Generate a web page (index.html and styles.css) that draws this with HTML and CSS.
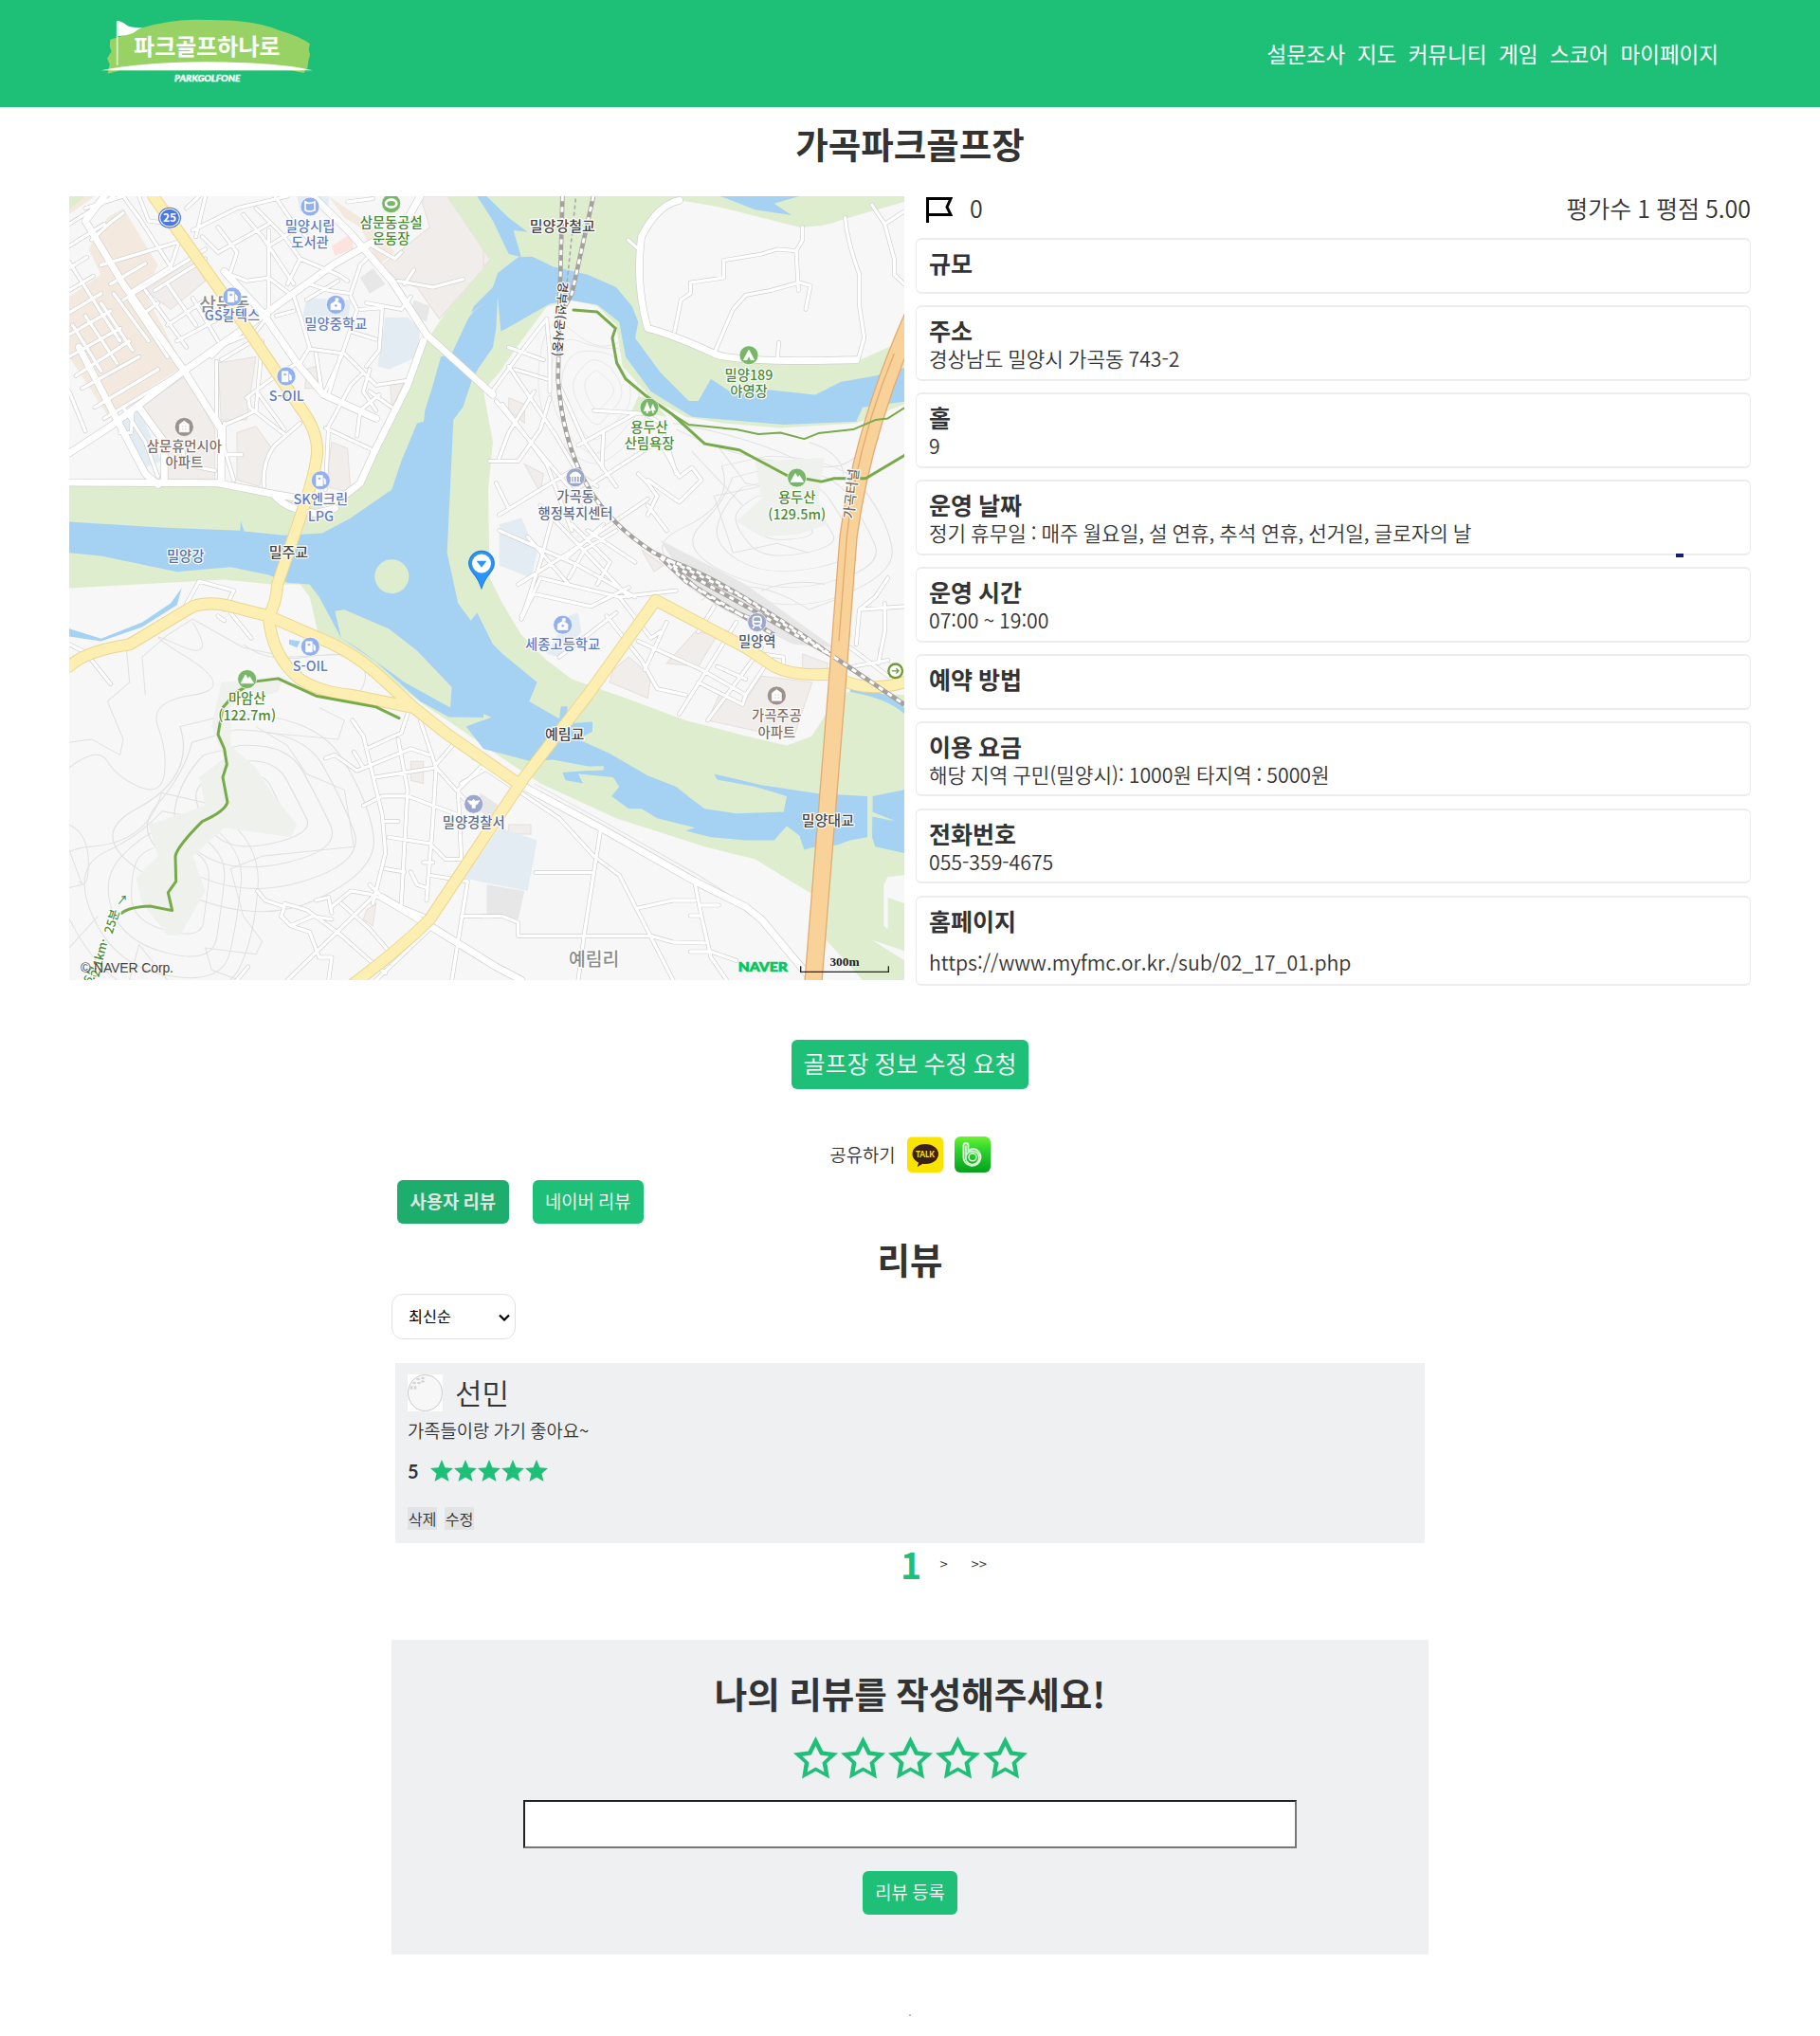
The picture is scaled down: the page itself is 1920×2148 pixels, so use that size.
FILE: index.html
```html
<!DOCTYPE html>
<html lang="ko">
<head>
<meta charset="utf-8">
<title>파크골프하나로</title>
<link rel="stylesheet" href="styles.css">
</head>
<body>
<header class="header">
  <svg class="logo" viewBox="0 0 672 210">
    <path d="M28 62 Q90 45 130 25 Q230 -5 330 0 Q480 -2 560 32 Q630 52 660 76 L656 92 660 110 655 130 652 152 640 168 600 160 60 160 20 170 26 140 18 122 32 100 26 84 Z" fill="#98d264"/>
    <path d="M50 3v140" stroke="#e9f5df" stroke-width="5"/>
    <path d="M52 2 Q68 6 86 20 Q100 25 130 24 Q112 32 100 42 Q80 50 52 52Z" fill="#fff"/>
    <path d="M0 160 Q120 135 330 133 Q560 134 668 160Z" fill="#fff"/>
    <text x="334" y="112" class="logo-name">파크골프하나로</text>
    <text x="335" y="196" class="logo-sub" textLength="208" lengthAdjust="spacingAndGlyphs">PARKGOLFONE</text>
  </svg>
  <nav class="nav"><a>설문조사</a><a>지도</a><a>커뮤니티</a><a>게임</a><a>스코어</a><a>마이페이지</a></nav>
</header>
<main>
<h1 class="title">가곡파크골프장</h1>
<section class="overview">
<svg class="map" viewBox="9 22 2643 2480" preserveAspectRatio="none">
  <defs>
    <g id="minor">
      <path d="M9 110L150 22M9 180L120 110M80 160L140 105 180 75M60 60L180 22M9 250L65 215M9 320L85 275M9 390L110 330M9 460L140 385M9 530L170 440M30 590L200 480M50 630L230 530M90 690L290 570M120 725L345 590M110 240L360 165M140 300L250 235M180 350L440 190M210 320L330 245M235 400L290 360"/>
      <path d="M9 230L110 390 170 480M20 430L110 575M60 400L160 550M110 360L210 510M150 330L260 480M200 350L320 530M9 640L60 765M180 690L250 800 290 910M180 22L230 90 330 245M230 22L260 100 340 110M330 245L355 170M410 150L440 22M400 130L540 60 700 22M430 150L480 200 640 110M380 60L420 22M480 120L540 200 520 260M560 80L620 150 720 300M600 60L690 150 740 220M660 22L720 110 770 160M250 320L380 500M320 300L410 430M400 345L480 480M280 320L440 220M320 430L440 350M350 480L500 400M460 530L500 490 600 450 640 400 640 130M475 545L475 720 490 750M490 540L590 480M495 260L570 290 640 280 720 340 740 400 770 500 740 550M700 300L740 220M770 300L830 320 900 330M740 220L860 270 890 290M640 180L720 130M570 660L650 600 730 550M575 655L580 690 690 775M620 480L600 700M610 650L690 760M490 750L560 720 600 700M500 740L500 820 530 920M505 840L555 840M740 740L660 810Q620 860 625 940M770 505L880 520 980 620 1080 605M790 520L810 650M900 340L920 380 870 530 815 650M870 520L830 650M930 380L1000 375 990 510 950 560M900 450L980 475M900 330L930 240 950 220M980 700L940 640 960 570M960 640L1030 690M990 650L930 700 920 780M820 755L980 830 1040 700M830 750L900 620 940 580M830 750L820 950M1050 290L1160 310 1255 285M1100 255L1070 300M950 360L1060 380 1090 340M970 180L1040 220 1060 200M890 40L970 30M760 350L860 290M665 400L720 385M370 830L370 870 470 890M210 700L205 770 170 770"/>
      <path d="M1778 160L1805 185M1925 450L1945 350 1975 330 1975 295 2080 280 2080 225 2200 205 2250 190 2310 195 2330 160 2330 120M2050 520L2110 380 2150 335 2230 320 2320 295 2355 305 2340 380M2310 195L2317 320M2250 540L2255 485M2465 90Q2470 160 2510 270L2510 370 2525 470 2505 540M2550 50L2590 110 2620 220 2620 270 2652 300M2590 110L2652 70M1400 500L1510 540M1340 650L1450 500 1520 410 1530 520 1530 640M1400 560L1550 780 1620 900 1680 940M1560 620L1640 800 1740 940M1420 570L1520 600M1360 670L1640 1000M1380 680L1520 870 1600 1080M1480 640L1400 770 1370 850M1340 860L1430 860 1500 760 1530 660M1370 1030L1500 950 1600 890M1400 1010L1360 930M1670 700L1750 705 1830 710 1880 740 1930 900M1800 710L1620 810M1700 770L1695 880M1870 800L1620 960M1880 800L1940 910 1980 880 2010 920 1940 990 1840 920M1810 900L1840 930 1870 970 1840 1030M1840 1000L1900 1080M1840 980L1590 1150 1430 1250M1500 1000L1780 1290M1540 1030L1500 1180 1450 1330M1600 1060L1720 1180 1680 1250M1650 1080L1800 1180M1460 1100L1590 1250M1700 1060L1580 1170M1740 1080L1640 1140 1590 1230M1370 1080L1620 1190 1800 1290M1440 1360L1500 1230 1750 1290 1930 1270M1440 1350L1480 1280 1660 1320 1780 1260M1750 1290L1850 1420 1880 1400M1560 1480L1740 1340M1710 1350L1820 1490 1870 1580 1960 1600M1810 1430L2010 1520 2150 1600 2140 1630 2000 1560M1900 1370L1830 1520M2120 1370L2040 1500 1940 1660M2200 1450L2120 1560 2030 1680M2050 1320L2000 1400M2150 1600L2230 1480M2200 1470L2270 1480 2270 1530M2060 1510L2150 1550M2600 1230L2560 1290 2510 1330 2500 1440M2510 1330L2652 1320M2590 1310L2590 1400 2570 1500M2480 1450L2600 1540M2490 1510L2600 1490"/>
      <path d="M370 1330L420 1240 530 1270 500 1330M480 1350L500 1365M520 1340L585 1420M80 1490L140 1565M9 1440L70 1470M905 1680L940 1730 1000 1980 1010 2100 970 2260M1080 1660L1060 1720 950 1770M1050 1740L1080 1900 1060 2260M1120 1680L1170 1830 1160 2000 1140 2250M820 1800L850 1790 920 1840 1090 1770 1150 1790M910 1780L940 1830M980 1860L1170 1830 1260 1930M940 1950L1000 1920 1080 1920 1240 1980M1000 2000L1050 2000M1020 2050L1150 2070 1200 2120 1250 2120 1240 1900 1320 1820M1170 1820L1230 1750M1250 1880L1350 1820 1290 1800M1010 2150L1070 2160M1090 2160L1110 2200 1140 2210M1130 2130L1160 2130M1150 2170L1270 2190 1220 2502M1250 2300L1350 2300M605 2220L630 2250 690 2270 680 2300 710 2330 780 2300 840 2310M690 2260L760 2280 870 2360 960 2440 1010 2480M710 2330L770 2350 800 2430 840 2430 830 2502M840 2270L900 2220 960 2230 1160 2310M790 2250L830 2240 840 2290M870 2260L960 2340 1020 2410M960 2200L990 2230M980 2230L700 2502M1150 2340L980 2502M540 2502L575 2460"/>
      <path d="M1320 1830L1410 1890 1560 1990 1670 2110 1750 2170 1920 2502M1410 1900L1380 1960M1690 2030L1640 2350 1620 2502M1485 2162L1670 2162M1320 2300L1380 2300 1430 2320 1430 2362 1850 2362 1920 2382 2020 2385M1805 2275L1920 2250 1990 2250M1990 2200L2010 2300 2040 2430 2090 2502M2010 2265L2065 2265M1975 2298L2010 2298M1975 2412L2040 2412 2120 2440"/>
    </g>
    <g id="major">
      <path d="M9 835L140 750 365 580 620 400 850 235 1070 110 1120 22M120 22L60 100 180 300 370 570 490 760 490 930M40 500L250 900 290 935M500 260L620 390 730 550 815 650 980 725M780 22L900 140 1030 290 1140 460 1350 650M230 690L310 800 310 930M9 928L480 930 660 965 780 985 860 985 930 930 975 830 1080 620 1130 480M660 970Q700 1015 790 1025L850 1010"/>
      <path d="M1940 35Q1870 50 1820 150 1800 300 1840 440 1920 460 2050 520 2110 550 2500 540 2600 500M1940 35L2060 55 2320 120Q2400 125 2460 90L2652 22M2060 55V22M1350 660L1360 720 1365 900 1350 1100 1370 1270 1430 1390 1530 1490 1620 1540 1770 1610 1960 1680 2150 1730 2290 1755Q2350 1750 2400 1680M1540 370Q1450 460 1400 560L1330 680M1600 1550Q1650 1620 1740 1610"/>
      <path d="M1430 1880L1690 2020 1990 2190 2150 2270 2200 2310 2350 2490M1000 2240L1150 2330 1360 2460 1440 2502"/>
    </g>
    <path id="yellow" d="M275 22L530 380 740 690Q800 770 793 840 788 890 760 980L668 1250Q665 1310 640 1350M9 1510Q60 1460 200 1440L400 1320Q460 1300 540 1325L640 1350 800 1420Q900 1460 980 1530L1100 1640 1200 1720 1430 1880M640 1350Q650 1480 740 1550 800 1590 900 1600L1100 1640M1865 1300L1650 1600 1450 1860 1310 2070 1150 2310Q1060 2400 900 2520M1865 1300L2150 1450 2240 1510Q2310 1545 2440 1532M2440 1545Q2530 1595 2652 1560"/>
    <path id="orange" d="M2680 400Q2520 760 2475 1100L2440 1560 2363 2520"/>
    <path id="rail" d="M1570 22L1562 330 1556 600Q1570 800 1650 940 1720 1060 1860 1150L2140 1290 2430 1480 2652 1630M1668 22L1600 330 1562 400M1900 1172Q2080 1230 2430 1480M1920 1190L2170 1330 2430 1480M1900 1172Q2020 1310 2200 1370M1880 1165L1960 1240 2240 1410"/>
    <g id="gas"><circle r="30"/><path d="M-14-16H6V17H-14ZM9-8L16-2V12H10" fill="#fff"/><path d="M-9-10H1V-2H-9Z"/></g>
    <g id="school"><circle r="30"/><path d="M-16-2L0-12 16-2V16H-16ZM-1-20H8V-12H-1Z" fill="#fff"/><circle cy="3" r="5"/></g>
    <g id="apt"><circle r="30"/><path d="M-15-8L0-19 15-8V16H-15Z" fill="#fff"/><path d="M-6-4h4v4h-4zM3-4h4v4h-4zM-6 5h4v4h-4zM3 5h4v4h-4z"/></g>
    <g id="peak"><circle r="30"/><path d="M-20 13L-5-14 3-1 8-8 21 13Z" fill="#fff"/></g>
    <g id="tree"><circle r="30"/><path d="M-17 10L-7-17 3 10H-5V17H-9V10ZM4 8L11-11 19 8H13V16H10V8Z" fill="#fff"/></g>
    <g id="tent"><circle r="30"/><path d="M-17 15L0-17 17 15H6L0 2-6 15Z" fill="#fff"/></g>
    <g id="hill">
      <path d="M0-60Q50-80 70-30T100 50 40 90-50 60-70-10Z"/>
      <path d="M0-110Q80-120 110-50T160 70 70 150-80 110-120 0-60-90Z"/>
      <path d="M-10-160Q110-170 150-80T220 90 110 210-110 180-170 20-100-130Z"/>
      <path d="M-20-210Q150-210 200-100T280 110 150 270-150 230-220 30-130-170Z"/>
      <path d="M-30-260Q180-260 250-120T330 130 180 330-200 280-270 40-160-220Z"/>
    </g>
  </defs>
  <path class="land" d="M0 0H2700V2600H0Z"/>
  <g fill="none" stroke="#e0e0e0" stroke-width="3">
    <use href="#hill" transform="translate(560 1920) scale(1.25 1)"/>
    <use href="#hill" transform="translate(330 2180) rotate(30)"/>
    <use href="#hill" transform="translate(2250 1040) scale(1.1 .75)"/>
    <use href="#hill" transform="translate(1690 620) rotate(70) scale(.7 .55)"/>
    <path d="M9 1750L80 1740 170 1790 180 1740 130 1620 200 1560 190 1450M9 1830Q100 1760 130 1810T230 1890 310 1850 290 1700 400 1600 380 1480 350 1440 400 1370M250 1600L240 1480 320 1410 400 1360 560 1450 700 1480 900 1470 960 1540M560 1440Q640 1500 760 1480T920 1490 940 1570 860 1580M600 1700L700 1760 760 1850 880 1900 910 2080 620 2110 520 2150 560 2300 620 2380 600 2420 440 2400 460 2470 540 2500M640 1720L860 1740 880 1680 800 1640M9 2010Q70 2040 70 2130T40 2190M9 2090L50 2200 9 2210M200 2502L230 2390 320 2502M9 2400L100 2300M1920 740Q2150 780 2300 850T2520 820M1930 760Q2120 850 2250 860M2060 810L2150 930 2200 940 2050 970 2110 1150 2250 1120 2350 1150M1980 830L2140 1000M2010 1300Q2150 1200 2350 1330L2430 1300M2200 1270Q2300 1230 2400 1250M2350 800Q2450 830 2460 900M2590 1430Q2540 1480 2610 1500M1480 1880L1700 2000 2000 2170 2190 2290 2350 2470"/>
  </g>
  <g fill="#eff2ec"><path d="M490 1560L690 1540 670 1590 520 1630 520 1760 600 1830 650 1910 730 2010 710 2050 500 2020 400 2110 440 2220 360 2360 320 2360 240 2260 220 2180 290 2110 260 2010 440 1950 420 1860 500 1800 460 1700Z"/><path d="M2120 1050L2200 980 2180 860 2400 850 2380 980 2410 1060 2320 1090 2200 1100Z"/></g>
  <g fill="#f4e9de"><path d="M9 22H90L9 80ZM130 90L180 60 290 240 250 330 370 560 130 715 9 530V340L110 270 70 190ZM830 22L880 90 930 120 990 240 1040 200 1000 150 930 90Z"/></g>
  <g fill="#f1edea" stroke="#e6dfda" stroke-width="3"><path d="M250 320L400 220 440 290 330 380ZM480 550L600 530 570 730 490 730ZM220 690L380 590 470 760V920H320L320 800ZM540 770L600 750 650 820 610 940 540 920ZM840 800L890 820 900 960 820 940ZM1120 22L1205 22 1343 225 1180 410 1110 310 1050 290 1000 240 1150 120ZM760 570L790 560 800 630 755 630ZM1025 615L1070 610 1030 690ZM1400 660L1450 680 1450 740 1400 700ZM1450 870L1510 900 1500 960ZM1990 1400L2060 1410 2000 1510 1900 1500ZM1730 1520L1780 1480 1850 1540 1840 1610 1720 1560ZM2200 1540L2360 1560 2300 1740 2030 1680 2070 1590 2140 1630ZM2330 1470L2410 1500 2400 1540 2330 1520ZM1400 2010H1470V2040H1400ZM1820 1140L1890 1190 1860 1210ZM1090 1810L1130 1810 1130 1880 1090 1870ZM950 2280L980 2260 970 2330 940 2310ZM1320 190L1345 220 1320 245Z"/></g>
  <g fill="#fce3df"><path d="M840 180L900 140 910 190 850 210Z"/></g>
  <g fill="#e3ebf3"><path d="M155 745L230 690 300 860 250 880ZM760 345L900 350 890 430 745 420ZM1010 405L1080 405 1120 440 1110 530 1020 570 985 560ZM730 22H830L830 50 740 70ZM1370 1060L1440 1040 1490 1150 1470 1230 1370 1190ZM1590 1350L1620 1340 1630 1400 1560 1480 1520 1470ZM1370 2020L1490 2060 1460 2220 1260 2180Z"/></g>
  <g fill="#e7e7e7"><path d="M930 280L970 250 1010 300 960 330ZM1100 350L1150 370 1140 420 1090 390ZM1330 2200L1450 2220 1430 2310 1330 2290ZM1310 1910L1370 1950 1350 2000 1300 1960ZM1880 1110L2150 1250 2430 1450 2300 1440 2080 1330 1970 1260Z"/></g>
  <path fill="#dfedcf" d="M9 22H60L9 65ZM9 938L480 940 740 985 840 1010 930 940 975 840 1010 740 1080 640 1140 480 1200 390 1343 225 1205 22H2652V680L2500 740 2260 755 2080 740 1960 720 1850 660 1760 560 1740 430 1680 370 1600 350 1520 372 1440 480 1370 580 1320 640 1350 800 1335 950 1340 1230 1380 1310 1440 1410 1520 1490 1600 1550 1770 1610 1960 1680 2150 1730 2280 1760 2360 1730 2410 1650 2470 1590 2652 1600V2502H2520L2400 2370 2360 2230 2180 2120 2020 2080 1740 1990 1500 1880 1320 1760 1250 1710 1130 1630 960 1500 800 1420 770 1290 740 1250 650 1250 500 1235 9 1262ZM1790 700L1810 655 1850 665 1900 720Z"/>
  <path class="land" d="M2652 40L2460 95Q2400 120 2320 120L2060 55 1940 35Q1870 50 1820 150 1800 300 1840 440L1920 470 2050 520 2110 545H2500L2600 500 2652 480ZM2600 2175L2652 2170V2260L2600 2240V2340L2587 2330V2200ZM2550 2375L2652 2410V2440Z"/>
  <g fill="#a5d2f3">
    <path d="M9 1052L300 1070 550 1080 552 1048 563 1082 690 1095 810 1088 900 1040 1030 950 1060 860 1110 740 1131 735 1135 700 1160 620 1185 530 1220 520 1290 370 1350 310 1365 265 1430 215 1475 213 1540 245 1650 270 1740 310 1790 370 1810 420 1800 470 1880 580 1970 670 2000 670 2040 600 2100 640 2180 630 2370 650 2450 610 2560 590 2652 565V672L2520 690 2500 735 2270 745 1980 720 1850 640 1770 530 1750 420 1680 365 1590 350 1530 362 1420 425 1375 450 1365 340 1360 440 1350 500 1305 565 1285 600 1255 690 1225 730 1205 1150 1240 1310 1280 1365 1300 1340 1350 1440 1380 1470 1490 1560 1465 1620 1560 1675 1565 1637 1585 1635 1588 1690 1665 1685 1665 1715 1620 1740 1720 1785 1840 1855 1930 1890 1980 1930 2020 1960 2120 1975 2270 1970 2280 1920 2180 1890 2060 1868 2050 1850 2200 1885 2380 1912 2535 1920V2050L2480 2060 2440 2075 2370 2080 2335 2090 2320 2045 2280 2015 2240 2060 2150 2060 2040 2050 1960 2030 1990 2020 1870 1990 1820 1960 1780 1960 1725 1920 1750 1890 1730 1860 1620 1850 1635 1880 1580 1870 1570 1845 1700 1835 1540 1805 1470 1810 1320 1770 1265 1700 1340 1672 1210 1670 1120 1620 980 1495 870 1420 800 1290 770 1250 700 1245 640 1220 520 1195 350 1210 110 1160 9 1150Z"/>
    <path d="M2552 1920L2652 1900V2100L2560 2080 2550 2050ZM2070 22H2320L2240 45 2295 82 2180 65ZM1300 22H1330L1400 90 1460 135 1415 130 1440 215 1400 205 1350 100ZM9 1390L110 1422 240 1370 330 1310 365 1262 350 1315 240 1385 110 1430 9 1415ZM705 1425L740 1430 730 1450 705 1440ZM2480 1590Q2600 1610 2652 1660L2652 1640Q2590 1580 2480 1580Z"/>
  </g>
  <g fill="#dfedcf"><circle cx="1030" cy="1225" r="54"/><path d="M850 1335L880 1330 1020 1390 1110 1460 1220 1575 1215 1640 1070 1560 920 1450 870 1420ZM1230 480L1280 390 1325 360 1290 385 1240 450ZM1500 1830L1700 1825 1700 1838 1570 1842ZM1320 1660L1345 1670 1320 1680ZM2550 1970L2625 2000 2550 1985Z"/></g>
  <g fill="none" stroke-linecap="round" stroke-linejoin="round">
    <use href="#minor" stroke="#cfcfcf" stroke-width="14"/>
    <use href="#major" stroke="#cfcfcf" stroke-width="25"/>
    <use href="#minor" stroke="#fff" stroke-width="10"/>
    <use href="#major" stroke="#fff" stroke-width="21"/>
    <g stroke-linecap="butt">
      <use href="#rail" stroke="#a5a19d" stroke-width="14"/>
      <use href="#rail" stroke="#fff" stroke-width="9" stroke-dasharray="16 18"/>
      <path d="M1612 30L1584 300" stroke="#aaa" stroke-width="5" stroke-dasharray="12 9"/>
    </g>
    <use href="#yellow" stroke="#ebd68f" stroke-width="39"/>
    <use href="#yellow" stroke="#fdeeb2" stroke-width="33"/>
    <g stroke-linecap="butt">
    <use href="#orange" stroke="#e2ab72" stroke-width="58"/>
    <use href="#orange" stroke="#f9d299" stroke-width="50"/>
    <path d="M2620 520Q2500 810 2470 1100L2445 1430" stroke="#e2ab72" stroke-width="4"/>
    <path d="M2430 1480L2652 1630" stroke="#a5a19d" stroke-width="14"/><path d="M2430 1480L2652 1630" stroke="#fff" stroke-width="9" stroke-dasharray="16 18"/>
    </g>
    <path d="M1053 1673L980 1638 790 1603 670 1548 600 1557 540 1590 495 1640 480 1725 500 1770 508 1820 495 1860 510 1940Q500 1970 430 2000 350 2080 345 2110L347 2190 322 2225 335 2282 265 2268Q200 2270 175 2290M1605 382L1680 388 1738 440 1728 470 1742 550 1770 600 1830 650 1915 710 2020 805 2130 825 2280 905 2390 925 2430 915 2530 915 2652 842" stroke="#77ab49" stroke-width="9"/>
    <path d="M1915 710L1970 745 2120 760 2190 775 2260 770 2335 790 2380 772 2490 760 2560 730 2600 725 2652 692" stroke="#77ab49" stroke-width="6"/>
  </g>
  <text class="m place" x="501" y="384">삼문동</text>
  <g stroke="#fff" stroke-width="2" class="poi">
    <g fill="#92b0ef"><use href="#gas" x="525" y="340"/><use href="#gas" x="696" y="592"/><use href="#gas" x="805" y="921"/><use href="#gas" x="772" y="1447"/><use href="#school" x="853" y="365"/><use href="#school" x="1571" y="1378"/><circle cx="771" cy="55" r="30"/><path d="M756 40Q766 48 786 40V66Q766 74 756 66Z" fill="none" stroke-width="5"/></g>
    <g fill="#9b928c"><use href="#apt" x="373" y="752"/><use href="#apt" x="2248" y="1602"/></g>
    <g fill="#78b767"><use href="#peak" x="572" y="1550"/><use href="#peak" x="2312" y="913"/><use href="#tree" x="1845" y="691"/><use href="#tent" x="2160" y="525"/><circle cx="1028" cy="45" r="30"/><ellipse cx="1028" cy="45" rx="17" ry="12" fill="none" stroke-width="8"/></g>
    <g fill="#9ba7cd"><circle cx="1289" cy="1945" r="30"/><path d="M1270 1934L1284 1936 1289 1930 1294 1936 1308 1934 1300 1946 1294 1947V1958H1284V1947L1278 1946Z" fill="#fff"/><circle cx="1611" cy="912" r="30"/><path d="M1595 905Q1611 885 1627 905V908H1595ZM1598 910V926M1606 910V926M1615 910V926M1624 910V926M1594 928H1628" fill="#fff" stroke-width="4"/><circle cx="2186" cy="1370" r="30"/><rect x="2173" y="1352" width="26" height="28" rx="9" fill="none" stroke-width="5"/><path d="M2174 1368H2198M2178 1382L2172 1389M2194 1382L2200 1389" stroke-width="5"/></g>
  </g>
  <g><ellipse cx="327" cy="90" rx="36" ry="33" fill="#4b78e2"/><ellipse cx="327" cy="90" rx="31" ry="28" fill="none" stroke="#fff" stroke-width="3"/><text class="m num" x="327" y="103">25</text></g>
  <circle cx="2624" cy="1524" r="22" fill="#fff" stroke="#6d9b37" stroke-width="7"/><path d="M2612 1524H2633M2626 1516L2634 1524 2626 1532" fill="none" stroke="#6d9b37" stroke-width="4"/>
  <g class="m blue"><text x="771" y="133">밀양시립</text><text x="771" y="184">도서관</text><text x="853" y="441">밀양중학교</text><text x="697" y="669">S-OIL</text><text x="805" y="998">SK엔크린</text><text x="805" y="1050">LPG</text><text x="772" y="1524">S-OIL</text><text x="1571" y="1455">세종고등학교</text><text x="525" y="416">GS칼텍스</text></g>
  <g class="m green"><text x="1028" y="121">삼문동공설</text><text x="1028" y="173">운동장</text><text x="572" y="1627">마암산</text><text x="572" y="1680">(122.7m)</text><text x="2160" y="603">밀양189</text><text x="2160" y="654">야영장</text><text x="1845" y="768">용두산</text><text x="1845" y="820">산림욕장</text><text x="2312" y="991">용두산</text><text x="2312" y="1044">(129.5m)</text><text class="trail" transform="translate(84 2502) rotate(-58)">36분</text><text class="trail" transform="translate(116 2440) rotate(-76)">·2.1km·</text><text class="trail" transform="translate(157 2320) rotate(-73)">25분</text><text class="trail" transform="translate(188 2257) rotate(-50)">→</text></g>
  <g class="m brown"><text x="373" y="828">삼문휴먼시아</text><text x="373" y="879">아파트</text><text x="2248" y="1681">가곡주공</text><text x="2248" y="1733">아파트</text><text transform="translate(2499 965) rotate(-84)">가곡터널</text></g>
  <g class="m slate"><text x="1611" y="988">가곡동</text><text x="1611" y="1041">행정복지센터</text><text x="1289" y="2020">밀양경찰서</text><text class="dark-slate" x="2186" y="1447">밀양역</text></g>
  <g class="m dark"><text x="703" y="1166">밀주교</text><text x="1570" y="134">밀양강철교</text><text x="1577" y="1741">예림교</text><text x="2410" y="2012">밀양대교</text><text class="thin" transform="translate(1549 410) rotate(95)">경부선(공사중)</text></g>
  <text class="m river" x="377" y="1178">밀양강</text>
  <text class="m place" x="1670" y="2457">예림리</text>
  <path d="M1314 1263Q1305 1235 1288 1215 1274 1198 1274 1184A40 40 0 0 1 1354 1184Q1354 1198 1340 1215 1323 1235 1314 1263Z" fill="#2b93fb" stroke="#1479dd" stroke-width="3"/><circle cx="1314" cy="1184" r="30" fill="#fff"/><path d="M1298 1176H1330L1314 1197Z" fill="#2b93fb"/>
  <text class="copyright" x="45" y="2478" textLength="294">© NAVER Corp.</text>
  <text class="naver" x="2126" y="2474" textLength="157" lengthAdjust="spacingAndGlyphs">NAVER</text>
  <text class="scale" x="2463" y="2456">300m</text>
  <path d="M2324 2458V2476H2602V2458" fill="none" stroke="#222" stroke-width="4"/>
</svg>
<div class="info">
  <div class="stats">
    <span class="flag"><svg viewBox="0 0 28 27"><path d="M1.5 27V1.5H26L22 10.5 26 18.5H2" fill="none" stroke="#000" stroke-width="3"/></svg>0</span>
    <span>평가수 1 평점 5.00</span>
  </div>
  <div class="card short"><h2>규모</h2></div>
  <div class="card"><h2>주소</h2><p>경상남도 밀양시 가곡동 743-2</p></div>
  <div class="card"><h2>홀</h2><p>9</p></div>
  <div class="card marked"><h2>운영 날짜</h2><p>정기 휴무일 : 매주 월요일, 설 연휴, 추석 연휴, 선거일, 글로자의 날</p></div>
  <div class="card"><h2>운영 시간</h2><p>07:00 ~ 19:00</p></div>
  <div class="card short"><h2>예약 방법</h2></div>
  <div class="card"><h2>이용 요금</h2><p>해당 지역 구민(밀양시): 1000원 타지역 : 5000원</p></div>
  <div class="card"><h2>전화번호</h2><p>055-359-4675</p></div>
  <div class="card tall"><h2>홈페이지</h2><p>https://www.myfmc.or.kr./sub/02_17_01.php</p></div>
</div>
</section>
<button class="btn edit">골프장 정보 수정 요청</button>
<div class="share"><span>공유하기</span>
  <svg viewBox="0 0 38 38"><rect y=".5" width="38" height="37.5" rx="5" fill="#fbe300"/><path d="M19 8C11 8 5.500 12.500 5.500 18.500 5.500 22.500 8 25.500 12 27.500L10.800 32 16.500 28.800C26 30 33 25 33 18.500 33 12.500 27 8 19 8Z" fill="#3b1e1e"/><text x="19" y="21.800" class="talk" textLength="20" lengthAdjust="spacingAndGlyphs">TALK</text></svg>
  <svg viewBox="0 0 38 38"><defs><linearGradient id="bg" x2="0" y2="1"><stop stop-color="#6cf32f"/><stop offset=".35" stop-color="#2fd62f"/><stop offset="1" stop-color="#04a01c"/></linearGradient></defs><rect width="38" height="38" rx="6" fill="url(#bg)"/><g fill="none" stroke="#e4fbe0"><path d="M9.500 21V9.500Q9.500 7 12 7T14.500 9.500V15.500Q17 13 20 13A9 9 0 1 1 9.500 21Z" stroke-width="1.900"/><path d="M12 9.500V21A7 7 0 1 0 19 15.500Q15 15.500 12 20" stroke-width="1.600"/><circle cx="19" cy="21.800" r="4" stroke-width="1.600"/></g></svg>
</div>
<section class="reviews">
  <div class="tabs"><button class="btn active">사용자 리뷰</button><button class="btn">네이버 리뷰</button></div>
  <h1 class="reviews-title">리뷰</h1>
  <div class="select">최신순<svg viewBox="0 0 12 8"><path d="M1 1.500L6 6.500 11 1.500" fill="none" stroke="#000" stroke-width="2.200"/></svg></div>
  <article class="review">
    <div class="author"><svg viewBox="0 0 37 39"><rect width="37" height="39" fill="#fff"/><ellipse cx="18.500" cy="19.500" rx="18" ry="19" fill="#f7f7f7" stroke="#ccc"/><g fill="#d5d5d5"><ellipse cx="11" cy="5" rx="2" ry="1.300"/><ellipse cx="16" cy="4" rx="2" ry="1.300"/><ellipse cx="7" cy="9" rx="2" ry="1.300"/><ellipse cx="12" cy="9" rx="2" ry="1.300"/><ellipse cx="16" cy="7.500" rx="2" ry="1.300"/><ellipse cx="4" cy="14" rx="1.500" ry="2"/><ellipse cx="8" cy="14" rx="1.500" ry="2"/></g></svg><span>선민</span></div>
    <p class="comment">가족들이랑 가기 좋아요~</p>
    <div class="rating"><b>5</b><svg viewBox="0 0 125 24"><defs><path id="star" d="M12 0L15.400 8.200 24 9 17.500 14.800 19.500 23 12 18.500 4.500 23 6.500 14.800 0 9 8.600 8.200Z"/></defs><g fill="#1ec078"><use href="#star"/><use href="#star" x="25"/><use href="#star" x="50"/><use href="#star" x="75"/><use href="#star" x="100"/></g></svg></div>
    <div class="actions"><span>삭제</span><span>수정</span></div>
  </article>
  <div class="pages"><b>1</b><span>&gt;</span><span>&gt;&gt;</span></div>
  <form class="write">
    <h1>나의 리뷰를 작성해주세요!</h1>
    <svg class="stars" viewBox="0 0 247 46"><defs><path id="line-star" d="M23.500 0L31.300 15.500 47 17.500 35.300 28 38 44.500 23.500 36.500 9 44.500 11.700 28 0 17.500 15.700 15.500ZM23.500 10L18.800 19.600 9.500 20.800 16.500 27.500 14.600 37.500 23.500 32.500 32.400 37.500 30.500 27.500 37.500 20.800 28.200 19.600Z"/></defs><g fill="#1ec078" fill-rule="evenodd"><use href="#line-star"/><use href="#line-star" x="50"/><use href="#line-star" x="100"/><use href="#line-star" x="150"/><use href="#line-star" x="200"/></g></svg>
    <input class="field" type="text">
    <button class="btn" type="button">리뷰 등록</button>
  </form>
</section>
</main>
<footer class="footer"><i></i></footer>
</body>
</html>
```
FILE: styles.css
```css
* { box-sizing: border-box; }
body { margin: 0; height: 2148px; background: #fff; color: #333; font-family: "Noto Sans CJK KR", "Noto Sans", sans-serif; font-weight: 350; word-spacing: -.06em; overflow-x: hidden; }
h1, h2, p { margin: 0; }
h1 { font-size: 37.5px; line-height: 54px; text-align: center; font-weight: 700; }

.header { height: 113px; background: #1ec078; display: flex; justify-content: space-between; align-items: flex-start; padding: 0 107px 0 106.500px; }
.logo { width: 224px; height: 70px; margin-top: 21px; overflow: visible; }
.logo-name { font-size: 72px; font-weight: 700; fill: #fff; text-anchor: middle; }
.logo-sub { font: italic 900 27px Lato, sans-serif; fill: #fff; stroke: #fff; stroke-width: 1px; text-anchor: middle; }
.nav { display: flex; gap: 12.500px; color: #fff; font-size: 22.500px; line-height: 32px; margin-top: 40px; font-weight: 400; }

.title { margin-top: 10.500px; }
.overview { display: flex; justify-content: space-between; padding: 0 73px; margin-top: 29.500px; }
.map { width: 881px; height: 827px; flex: none; font-family: "Noto Sans CJK KR", sans-serif; word-spacing: normal; }
.land { fill: #f7f7f7; }
.m { font-size: 43px; font-weight: 500; text-anchor: middle; paint-order: stroke; stroke: #fff; stroke-width: 7px; stroke-linejoin: round; }
.blue { fill: #5f7cc4; }
.green { fill: #4a8c34; }
.brown { fill: #7d6f67; }
.slate { fill: #626c8a; }
.dark-slate { fill: #50576c; }
.dark { fill: #454545; font-size: 45px; }
.thin { font-size: 38px; }
.trail { font-size: 38px; }
.river { fill: #4c72a8; }
.place { fill: #8d8d8d; font-size: 58px; }
.num { fill: #fff; stroke: none; font-size: 36px; font-weight: 700; }
.copyright { font: 42px "Liberation Sans", sans-serif; fill: #444; }
.naver { font: 900 40px Lato, sans-serif; fill: #03c75a; stroke: #03c75a; stroke-width: 2px; }
.scale { font: bold 40px "Liberation Serif", serif; text-anchor: middle; fill: #222; }

.info { width: 881px; display: flex; flex-direction: column; gap: 12.400px; }
.stats { height: 32px; display: flex; justify-content: space-between; font-size: 25px; line-height: 25px; padding-left: 11px; }
.flag { display: flex; gap: 18px; }
.flag svg { width: 28px; height: 27px; margin-top: 1px; }
.card { height: 79.600px; border: solid #ececec; border-width: 2px 1px; border-radius: 6px; padding: 6px 13px 0; position: relative; }
.card.short { height: 58.400px; }
.card.tall { height: 95px; }
.card h2 { font-size: 25px; line-height: 36px; font-weight: 700; }
.card p { font-size: 21.250px; line-height: 24px; }
.card.tall p { margin-top: 14px; }
.marked::after { content: ""; position: absolute; right: 70px; bottom: -4px; width: 8px; height: 4px; background: #1a1a7c; }

.btn { display: block; font: inherit; word-spacing: inherit; font-size: 18.750px; line-height: 27px; height: 46px; padding: 8px 13px 11px; border: 0; border-radius: 6px; background: #1ec078; color: #fff; white-space: nowrap; }
.btn.edit { width: 250px; height: 52px; margin: 57px auto 0; padding: 0 0 2px; font-size: 25px; }
.share { display: flex; justify-content: center; align-items: center; gap: 12px; height: 38px; margin-top: 50px; font-size: 18.750px; }
.share svg { width: 38px; height: 38px; }
.talk { font: 900 8.500px Lato, sans-serif; fill: #fbe300; text-anchor: middle; }

.reviews { width: 1094px; margin: 8px auto 0; }
.tabs { display: flex; gap: 25px; padding-left: 6px; }
.tabs .btn { width: 117.500px; padding: 0 0 2px; }
.tabs .active { background: #1dae6d; color: #e0e5e2; font-weight: 700; }
.reviews-title { margin-top: 10px; }
.select { width: 131px; height: 48.500px; margin-top: 10px; border: solid #e2e2e2; border-width: 1.500px 1px; border-radius: 12px; display: flex; align-items: center; justify-content: space-between; padding: 0 5px 3px 17px; font-size: 16.250px; font-weight: 400; color: #000; }
.select svg { width: 12px; height: 8px; margin-top: 5px; }
.review { width: 1086px; height: 190px; margin: 25px auto 0; background: #eff0f2; padding: 12px 13px; }
.author { display: flex; gap: 13px; height: 39px; align-items: center; font-size: 31px; }
.author span { margin-top: -2px; }
.author svg { width: 37px; height: 39px; }
.comment { font-size: 18.750px; line-height: 27px; margin-top: 6px; }
.rating { display: flex; align-items: center; gap: 12px; margin-top: 16px; height: 27px; font: 20px Lato, sans-serif; }
.rating svg { width: 125px; height: 24px; }
.actions { display: flex; gap: 8px; margin-top: 25px; font-size: 16.250px; line-height: 24px; }
.actions span { background: #e2e3e5; width: 31px; text-align: center; letter-spacing: -.2px; }
.pages { height: 102px; display: flex; justify-content: flex-start; align-items: flex-start; padding-left: 537px; font-size: 15px; line-height: 43px; }
.pages b { font-size: 37.500px; color: #1ec078; width: 41.500px; }
.pages span { width: 33px; }
.write { height: 332px; background: #eff0f2; display: flex; flex-direction: column; align-items: center; }
.write h1 { margin-top: 29px; }
.stars { width: 247px; height: 46px; margin-top: 19px; }
.field { width: 816px; height: 51px; margin-top: 21px; border: 2px inset #767676; background: #fff; }
.write .btn { margin-top: 24px; }
.footer { height: 85px; display: flex; justify-content: center; padding-top: 63px; }
.footer i { width: 2px; height: 2px; background: #bbb; }
```
